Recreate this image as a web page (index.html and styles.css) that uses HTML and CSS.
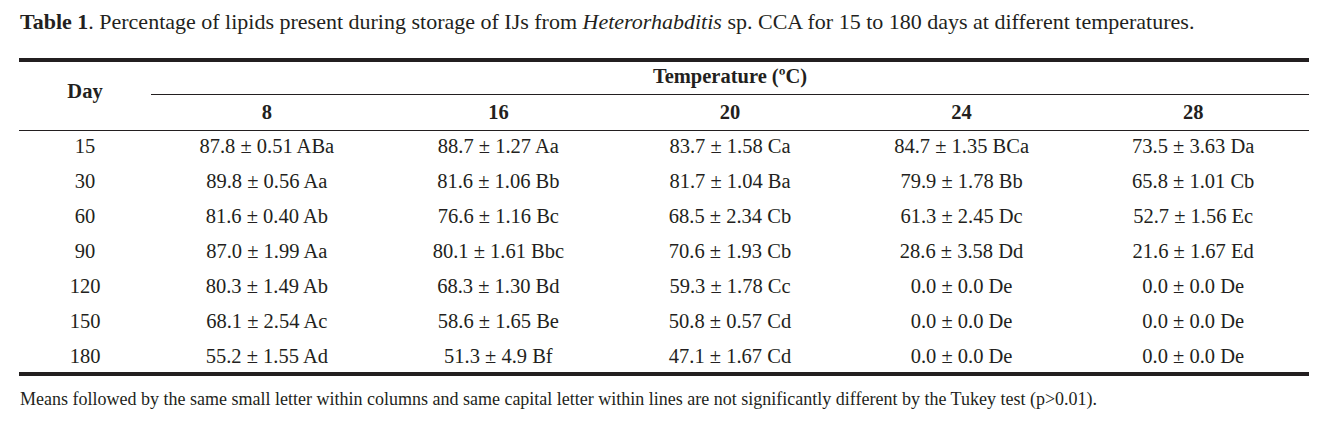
FILE: index.html
```html
<!DOCTYPE html>
<html>
<head>
<meta charset="utf-8">
<link rel="stylesheet" href="styles.css">
</head>
<body>
<div class="page">
  <p class="caption"><b>Table 1</b>. Percentage of lipids present during storage of IJs from <i>Heterorhabditis</i> sp. CCA for 15 to 180 days at different temperatures.</p>
  <table class="data">
    <colgroup>
      <col class="c-day"><col class="c-t"><col class="c-t"><col class="c-t"><col class="c-t"><col class="c-t">
    </colgroup>
    <thead>
      <tr class="h1">
        <th rowspan="2" class="day">Day</th>
        <th colspan="5" class="temp">Temperature (ºC)</th>
      </tr>
      <tr class="h2">
        <th>8</th><th>16</th><th>20</th><th>24</th><th>28</th>
      </tr>
    </thead>
    <tbody>
      <tr><td>15</td><td>87.8 ± 0.51 ABa</td><td>88.7 ± 1.27 Aa</td><td>83.7 ± 1.58 Ca</td><td>84.7 ± 1.35 BCa</td><td>73.5 ± 3.63 Da</td></tr>
      <tr><td>30</td><td>89.8 ± 0.56 Aa</td><td>81.6 ± 1.06 Bb</td><td>81.7 ± 1.04 Ba</td><td>79.9 ± 1.78 Bb</td><td>65.8 ± 1.01 Cb</td></tr>
      <tr><td>60</td><td>81.6 ± 0.40 Ab</td><td>76.6 ± 1.16 Bc</td><td>68.5 ± 2.34 Cb</td><td>61.3 ± 2.45 Dc</td><td>52.7 ± 1.56 Ec</td></tr>
      <tr><td>90</td><td>87.0 ± 1.99 Aa</td><td>80.1 ± 1.61 Bbc</td><td>70.6 ± 1.93 Cb</td><td>28.6 ± 3.58 Dd</td><td>21.6 ± 1.67 Ed</td></tr>
      <tr><td>120</td><td>80.3 ± 1.49 Ab</td><td>68.3 ± 1.30 Bd</td><td>59.3 ± 1.78 Cc</td><td>0.0 ± 0.0 De</td><td>0.0 ± 0.0 De</td></tr>
      <tr><td>150</td><td>68.1 ± 2.54 Ac</td><td>58.6 ± 1.65 Be</td><td>50.8 ± 0.57 Cd</td><td>0.0 ± 0.0 De</td><td>0.0 ± 0.0 De</td></tr>
      <tr class="last"><td>180</td><td>55.2 ± 1.55 Ad</td><td>51.3 ± 4.9 Bf</td><td>47.1 ± 1.67 Cd</td><td>0.0 ± 0.0 De</td><td>0.0 ± 0.0 De</td></tr>
    </tbody>
  </table>
  <p class="note">Means followed by the same small letter within columns and same capital letter within lines are not significantly different by the Tukey test (p&gt;0.01).</p>
</div>
</body>
</html>
```
FILE: styles.css
```css
html, body { margin: 0; padding: 0; background: #fff; }
body { font-family: "Liberation Serif", "Times New Roman", serif; color: #231f20; }
.page { padding: 0 26px 0 19px; width: 1290px; }
.caption { margin: 0; padding: 9px 0 0 1px; font-size: 22px; line-height: 26px; white-space: nowrap; }
.data { border-collapse: separate; border-spacing: 0; width: 1290px; table-layout: fixed; margin-top: 23px; font-size: 20.5px; line-height: 24px; }
.c-day { width: 132px; }
.data th { font-weight: bold; text-align: center; padding: 0; }
.data tr.h1 th { border-top: 4px solid #231f20; }
.data th.day { border-bottom: 1px solid #231f20; vertical-align: middle; padding-bottom: 10px; }
.data th.temp { padding: 2px 0 6px; border-bottom: 1px solid #231f20; }
.data tr.h2 th { padding: 5px 0 6px; border-bottom: 1px solid #231f20; }
.data td { text-align: center; padding: 3px 0 8px; vertical-align: top; }
.data tr.last td { padding-bottom: 4px; border-bottom: 4px solid #231f20; }
.note { margin: 12px 0 0 1px; font-size: 18px; line-height: 22px; white-space: nowrap; }
```
